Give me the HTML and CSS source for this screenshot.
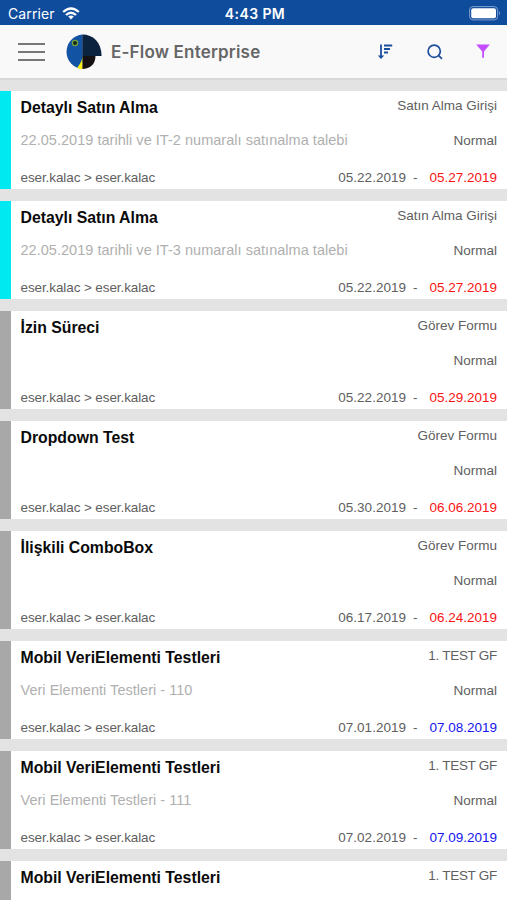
FILE: index.html
```html
<!DOCTYPE html>
<html lang="tr">
<head>
    <meta charset="UTF-8">
    <meta name="viewport" content="width=device-width, initial-scale=1.0">
    <title>E-Flow Enterprise</title>
    <link rel="stylesheet" href="styles.css">
</head>
<body>
    <div class="app">
        <div class="status-bar">
            <div class="carrier">
                <span>Carrier</span>
                <svg width="18" height="13" viewBox="0 0 18 13" fill="none" stroke="#fff" stroke-width="2.3">
                    <path d="M1.2 5 Q9 -2 16.8 5"/>
                    <path d="M4 8 Q9 3.4 14 8"/>
                    <path d="M9 12.4 L6.2 9.6 Q9 7.4 11.8 9.6 Z" fill="#fff" stroke="none"/>
                </svg>
            </div>
            <div class="time">4:43 PM</div>
            <svg class="battery" width="33" height="15" viewBox="0 0 33 15">
                <rect x="0.6" y="0.6" width="28" height="13.3" rx="3.4" fill="none" stroke="#7f9fce"/>
                <rect x="2.2" y="2.2" width="24.8" height="10" rx="2" fill="#fff"/>
                <path d="M30 5 Q32 7.2 30 9.5 Z" fill="#7f9fce"/>
            </svg>
        </div>

        <div class="header">
            <div class="menu">
                <span></span>
                <span></span>
                <span></span>
            </div>
            <svg class="logo" width="37" height="36" viewBox="0 0 37 36">
                <path d="M17.5 0.5 A17.3 17.3 0 0 0 17.5 35 Z" fill="#1253a4"/>
                <path d="M17.3 0.5 C28 0.5 36.4 8 36.6 22 H17.3 Z" fill="#0c2340"/>
                <path d="M17.3 22 H30.5 C30.5 30 25 35 17.3 35 Z" fill="#151012"/>
                <path d="M17.3 22.5 C17 28 14.5 30 12.3 34 Q14.5 35.2 17.3 35.2 Z" fill="#f6ee14"/>
                <circle cx="10" cy="9" r="2.6" fill="#102418" stroke="#79a33c" stroke-width="1.3"/>
            </svg>
            <h1>E-Flow Enterprise</h1>
            <div class="actions">
                <svg width="16" height="16" viewBox="0 0 16 16" fill="none" stroke="#1c4f9c" stroke-width="1.8">
                    <path d="M4 0.6 V13"/>
                    <path d="M0.8 11.6 H7.2 L4 15 Z" fill="#1c4f9c" stroke="none"/>
                    <path d="M7 1.5 H15.2 M7 5 H13 M7 8.5 H11"/>
                </svg>
                <svg width="16" height="16" viewBox="0 0 16 16" fill="none" stroke="#1c4f9c" stroke-width="1.7">
                    <circle cx="7.2" cy="7.2" r="6.1"/>
                    <path d="M11.2 11.2 L15 14.8"/>
                </svg>
                <svg width="14" height="15" viewBox="0 0 14 15">
                    <path d="M0.2 0.6 H13.8 L8 7.4 V13.8 H6.2 V7.4 Z" fill="#c44dff"/>
                </svg>
            </div>
        </div>

        <div class="task-list">
            <div class="task new">
                <div class="row first"><b>Detaylı Satın Alma</b><span>Satın Alma Girişi</span></div>
                <div class="row second"><span class="desc">22.05.2019 tarihli ve IT-2 numaralı satınalma talebi</span><span>Normal</span></div>
                <div class="row third"><span class="users">eser.kalac &gt; eser.kalac</span><span class="dates">05.22.2019<i>-</i><span class="late">05.27.2019</span></span></div>
            </div>
            <div class="task new">
                <div class="row first"><b>Detaylı Satın Alma</b><span>Satın Alma Girişi</span></div>
                <div class="row second"><span class="desc">22.05.2019 tarihli ve IT-3 numaralı satınalma talebi</span><span>Normal</span></div>
                <div class="row third"><span class="users">eser.kalac &gt; eser.kalac</span><span class="dates">05.22.2019<i>-</i><span class="late">05.27.2019</span></span></div>
            </div>
            <div class="task">
                <div class="row first"><b>İzin Süreci</b><span>Görev Formu</span></div>
                <div class="row second"><span class="desc"></span><span>Normal</span></div>
                <div class="row third"><span class="users">eser.kalac &gt; eser.kalac</span><span class="dates">05.22.2019<i>-</i><span class="late">05.29.2019</span></span></div>
            </div>
            <div class="task">
                <div class="row first"><b>Dropdown Test</b><span>Görev Formu</span></div>
                <div class="row second"><span class="desc"></span><span>Normal</span></div>
                <div class="row third"><span class="users">eser.kalac &gt; eser.kalac</span><span class="dates">05.30.2019<i>-</i><span class="late">06.06.2019</span></span></div>
            </div>
            <div class="task">
                <div class="row first"><b>İlişkili ComboBox</b><span>Görev Formu</span></div>
                <div class="row second"><span class="desc"></span><span>Normal</span></div>
                <div class="row third"><span class="users">eser.kalac &gt; eser.kalac</span><span class="dates">06.17.2019<i>-</i><span class="late">06.24.2019</span></span></div>
            </div>
            <div class="task">
                <div class="row first"><b>Mobil VeriElementi Testleri</b><span class="step">1. TEST GF</span></div>
                <div class="row second"><span class="desc">Veri Elementi Testleri - 110</span><span>Normal</span></div>
                <div class="row third"><span class="users">eser.kalac &gt; eser.kalac</span><span class="dates">07.01.2019<i>-</i><span class="due">07.08.2019</span></span></div>
            </div>
            <div class="task">
                <div class="row first"><b>Mobil VeriElementi Testleri</b><span class="step">1. TEST GF</span></div>
                <div class="row second"><span class="desc">Veri Elementi Testleri - 111</span><span>Normal</span></div>
                <div class="row third"><span class="users">eser.kalac &gt; eser.kalac</span><span class="dates">07.02.2019<i>-</i><span class="due">07.09.2019</span></span></div>
            </div>
            <div class="task last">
                <div class="row first"><b>Mobil VeriElementi Testleri</b><span class="step">1. TEST GF</span></div>
            </div>
        </div>
    </div>
</body>
</html>
```
FILE: styles.css
```css
* {
    box-sizing: border-box;
}
body {
    margin: 0;
    background-color: #e3e3e3;
    font-family: "Liberation Sans", Arial, sans-serif;
}
svg {
    display: block;
}
.app {
    display: flex;
    flex-direction: column;
    height: 100vh;
    overflow: hidden;
}
.status-bar {
    display: grid;
    grid-template-columns: 1fr auto 1fr;
    align-items: center;
    flex: none;
    height: 25px;
    padding: 2px 5px 0 8px;
    background-color: #104c9c;
    color: #fff;
    font-family: Inter, sans-serif;
    font-size: 14px;
}
.carrier {
    display: flex;
    align-items: center;
    gap: 7px;
    letter-spacing: 0.1px;
}
.time {
    font-weight: 600;
    letter-spacing: 0.4px;
}
.battery {
    justify-self: end;
}
.header {
    display: flex;
    align-items: center;
    flex: none;
    height: 55px;
    padding: 0 17px 0 18px;
    background-color: #f9f9f9;
    border-bottom: 2px solid #d8d8d8;
}
.menu {
    display: flex;
    flex-direction: column;
    gap: 6px;
    width: 27px;
}
.menu span {
    height: 2px;
    background-color: #777;
}
.logo {
    margin-left: 20px;
}
h1 {
    margin: 0 0 0 9px;
    font-family: Inter, sans-serif;
    font-size: 17px;
    font-weight: 600;
    letter-spacing: 0.19px;
    color: #666;
}
.actions {
    display: flex;
    align-items: center;
    gap: 33.5px;
    margin-left: auto;
}
.task-list {
    display: flex;
    flex-direction: column;
    flex: 1;
    gap: 12px;
    padding-top: 11px;
}
.task {
    flex: none;
    height: 98px;
    padding: 0 10px 0 9.5px;
    border-left: 11px solid #a8a8a8;
    background-color: #fff;
    color: #606060;
    font-size: 13.5px;
}
.task.new {
    border-left-color: #00e8f0;
}
.task.last {
    flex: 1;
    height: auto;
}
.row {
    display: flex;
    justify-content: space-between;
    white-space: nowrap;
}
.first {
    height: 34px;
    padding-top: 7px;
    line-height: 16px;
}
.first b {
    padding-top: 2px;
    color: #0a0a0a;
    font-size: 15.8px;
}
.step {
    letter-spacing: -0.28px;
}
.second {
    height: 32px;
    line-height: 32px;
}
.third {
    height: 32px;
    line-height: 42px;
}
.desc {
    color: #b0b0b0;
    font-size: 14.5px;
    line-height: 30px;
    letter-spacing: 0.03px;
}
.users {
    letter-spacing: -0.1px;
}
.dates i {
    margin: 0 12px 0 7px;
    font-style: normal;
}
.late {
    color: #fa1414;
}
.due {
    color: #1414f0;
}
```
